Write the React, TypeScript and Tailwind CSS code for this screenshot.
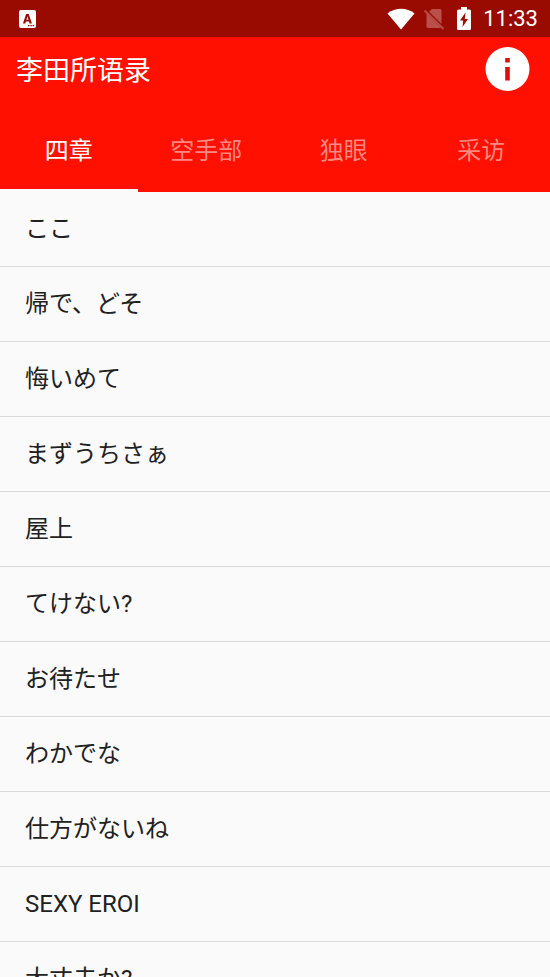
import React from "react";

type RowProps = {
  text: string;
};

const tabs = ["四章", "空手部", "独眼", "采访"];

const phrases = [
  "ここ",
  "帰で、どそ",
  "悔いめて",
  "まずうちさぁ",
  "屋上",
  "てけない?",
  "お待たせ",
  "わかでな",
  "仕方がないね",
  "SEXY EROI",
  "大丈夫か?",
];

const StatusBar = () => {
  return (
    <div className="flex h-[37px] items-center justify-between bg-[#990a00] pl-[19px] pr-3 text-white">
      <svg width="17" height="18" viewBox="0 0 17 18" aria-hidden="true">
        <rect width="17" height="18" rx="2" fill="#fff" />
        <path
          d="M4 13.500 7.100 4h2.600l3.200 9.500h-2.300l-.6-2H6.900l-.6 2zM7.400 9.800h2.100L8.400 6.300z"
          fill="#990a00"
        />
        <path d="M9 15h1.500v1.300H9zM11.300 15h1.500v1.300h-1.500zM13.600 15h1.500v1.300h-1.500z" fill="#990a00" />
      </svg>
      <div className="flex items-center">
        <svg width="28" height="22" viewBox="0 0 28 22" aria-hidden="true">
          <path d="M.5 5.500C8.500-.7 19.500-.7 27.500 5.500L14 21.500z" fill="#fff" />
        </svg>
        <svg className="ml-2" width="22" height="22" viewBox="0 0 22 22" aria-hidden="true">
          <path d="M9 1h8a1.500 1.500 0 0 1 1.500 1.500V16L6 3.700z" fill="#b9504a" />
          <path d="M3.500 5.500 18 20H5a1.500 1.500 0 0 1-1.500-1.500z" fill="#b9504a" />
          <path d="m1.500 2.500 19 18.500" stroke="#b9504a" strokeWidth="1.800" />
        </svg>
        <svg className="ml-3" width="14" height="23" viewBox="0 0 14 23" aria-hidden="true">
          <path
            d="M4 0h6v2.500h2.500Q14 2.500 14 4v17.500q0 1.500-1.500 1.500h-11Q0 23 0 21.500V4q0-1.500 1.500-1.500H4z"
            fill="#fff"
          />
          <path d="M8.500 5.500 3 13.500h3.200L5.500 20l5.500-8H7.800z" fill="#990a00" />
        </svg>
        <time className="ml-3 text-[22px] leading-6">11:33</time>
      </div>
    </div>
  );
};

const Header = () => {
  return (
    <header className="bg-[#ff1000] text-white">
      <div className="flex h-16 items-center justify-between pl-4 pr-5">
        <h1 className="pt-1 text-[27px] leading-8">李田所语录</h1>
        <button type="button" aria-label="Info" className="cursor-pointer">
          <svg width="45" height="45" viewBox="0 0 45 45">
            <circle cx="22.500" cy="22" r="22" fill="#fff" />
            <path d="M20.200 11h4.600v4.500h-4.600zM20.200 20h4.600v13.500h-4.600z" fill="#e01008" />
          </svg>
        </button>
      </div>
      <nav className="grid h-[91px] grid-cols-4">
        {tabs.map((tab, i) => (
          <button
            key={tab}
            type="button"
            className={
              i === 0
                ? "cursor-pointer border-b-3 border-[#fafafa] pt-[11px] text-2xl text-white"
                : "cursor-pointer border-b-3 border-transparent pt-[11px] text-2xl text-[#ff8880]"
            }
          >
            {tab}
          </button>
        ))}
      </nav>
    </header>
  );
};

const Row = ({ text }: RowProps) => {
  return (
    <li className="border-b border-[#d9d9d9]">
      <button
        type="button"
        className="flex h-[74px] w-full cursor-pointer items-center px-[25px] text-left text-2xl text-[#212121]"
      >
        {text}
      </button>
    </li>
  );
};

const App = () => {
  return (
    <div className="flex h-screen flex-col bg-[#fafafa] font-[Roboto,'Noto_Sans_CJK_SC',sans-serif]">
      <StatusBar />
      <Header />
      <main className="min-h-0 flex-1 overflow-y-auto [scrollbar-width:none]">
        <ul>
          {phrases.map((phrase) => (
            <Row key={phrase} text={phrase} />
          ))}
        </ul>
      </main>
    </div>
  );
};

export default App;
